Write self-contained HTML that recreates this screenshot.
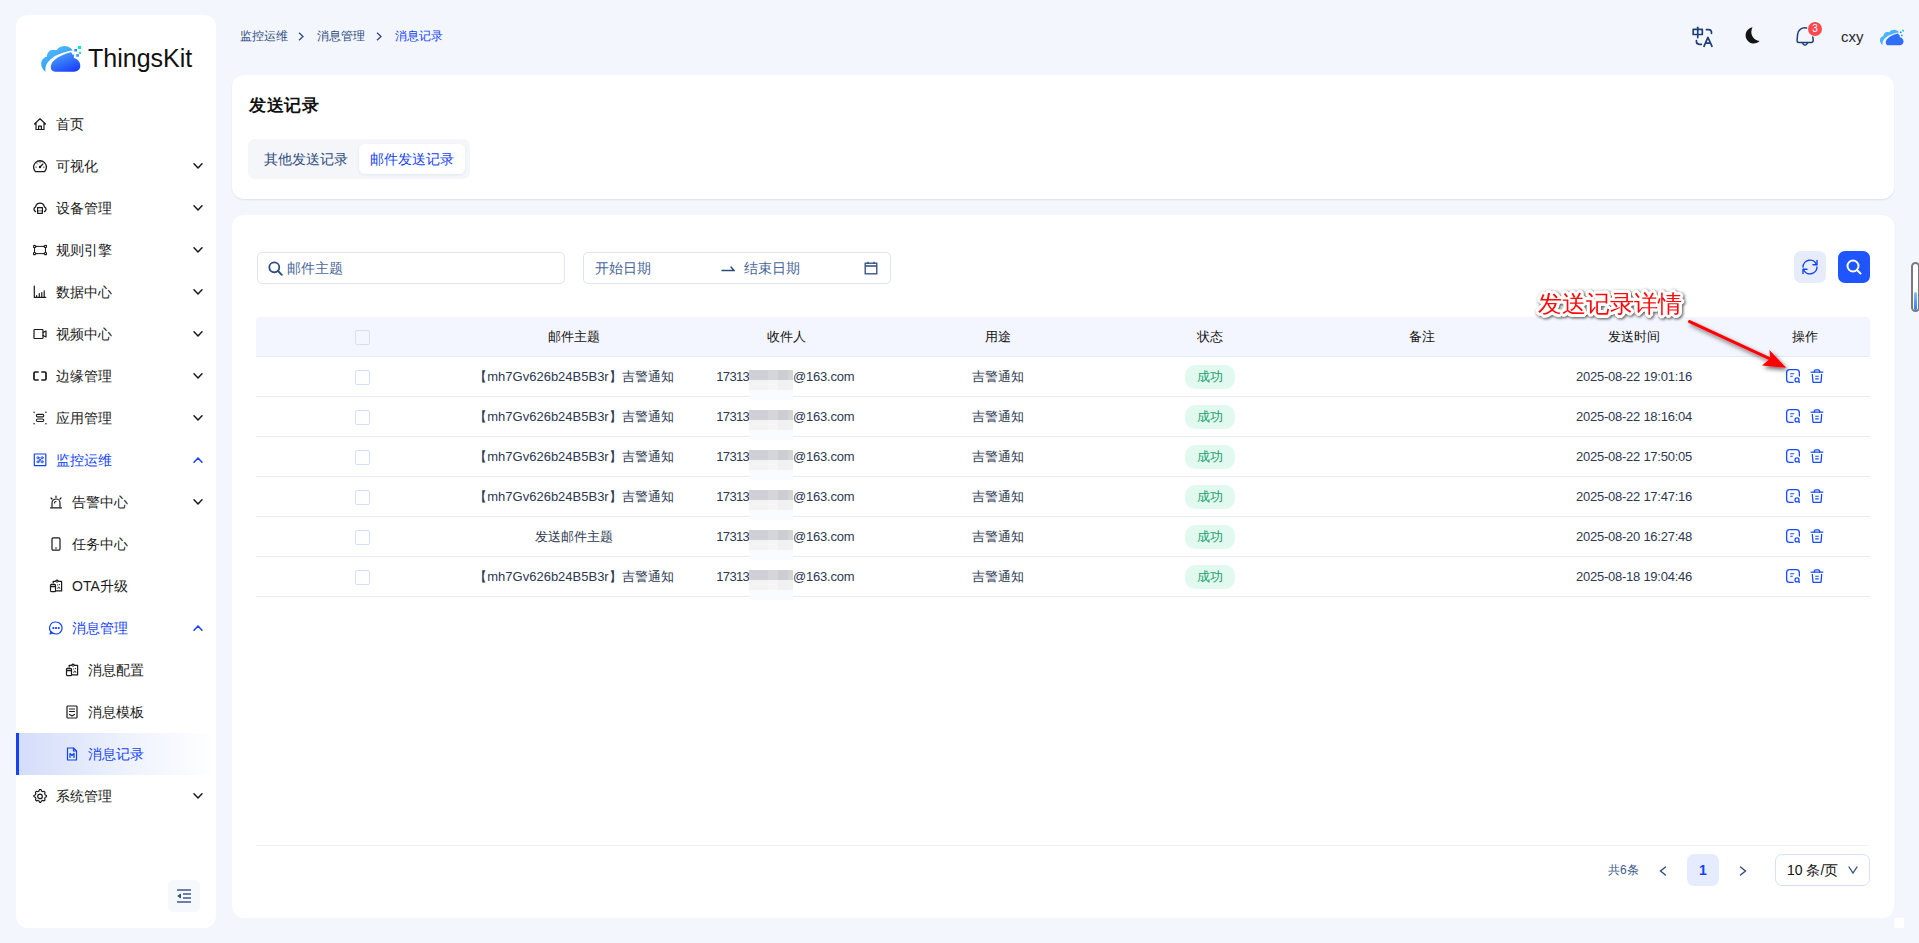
<!DOCTYPE html>
<html><head><meta charset="utf-8">
<style>
*{box-sizing:border-box;margin:0;padding:0}
html,body{width:1919px;height:943px;overflow:hidden;background:#f3f6fd;font-family:"Liberation Sans",sans-serif;color:#1f1f1f}
.abs{position:absolute}
svg{display:block}
#side{position:absolute;left:16px;top:15px;width:200px;height:913px;background:#fff;border-radius:12px;overflow:hidden}
.mi{position:absolute;left:0;width:200px;height:42px;font-size:14px;line-height:42px;color:#1a1a1a;white-space:nowrap}
.mi .ic{position:absolute;top:14px;width:14px;height:14px}
.mi .tx{position:absolute;top:0}
.mi .chev{position:absolute;left:177px;top:18px;width:10px;height:6px}
.mi.blue{color:#1443f5}
.mi.sel{background:linear-gradient(90deg,#d3dcfa 0%,#eef2fd 55%,#ffffff 100%)}
.mi.sel:before{content:"";position:absolute;left:0;top:0;width:3px;height:42px;background:#1443f5}
#crumb{position:absolute;left:240px;top:28px;font-size:12px;line-height:16px;color:#2d4b7d;white-space:nowrap}
.card{position:absolute;left:232px;width:1662px;background:#fff;border-radius:12px}
.inp{position:absolute;border:1px solid #dbe4f8;border-radius:5px;background:#fff}
.ph{position:absolute;font-size:14px;line-height:16px;color:#49669a;white-space:nowrap}
.th{position:absolute;font-size:13px;line-height:16px;color:#111;white-space:nowrap;font-weight:500;transform:translateX(-50%)}
.td{position:absolute;font-size:13px;line-height:16px;color:#2c3850;white-space:nowrap;transform:translateX(-50%)}
.cb{position:absolute;left:355px;width:15px;height:15px;border:1px solid #d3dffb;border-radius:2px;background:#fff}
.rowline{position:absolute;left:256px;width:1614px;height:1px;background:#e2e9fa}
.tag{position:absolute;left:1185px;width:50px;height:24px;border-radius:10px;background:#e2f9ef;color:#18a06a;font-size:13px;line-height:24px;text-align:center}
.act{position:absolute;width:14px;height:14px}
</style></head><body>

<!-- SIDEBAR -->
<div id="side">
  <!-- logo -->
  <svg class="abs" style="left:22px;top:25px" width="48" height="36" viewBox="38 40 48 36">
    <defs>
      <linearGradient id="lg1" x1="0" y1="0" x2="0.6" y2="1"><stop offset="0" stop-color="#5ec0ff"/><stop offset="1" stop-color="#2196f8"/></linearGradient>
      <linearGradient id="lg2" x1="0.2" y1="0" x2="0.8" y2="1"><stop offset="0" stop-color="#4aa8ff"/><stop offset="1" stop-color="#1a3cff"/></linearGradient>
    </defs>
    <path d="M45.6 71.7C42 69 40.5 65 41.5 61.5C42.3 59 44 57.5 47 56.5C46.8 52.5 50 49.5 53.5 49.8C55 50 56 50.2 56.7 50C58.5 47 62 45.8 65 46C68.5 46.3 71.5 48 72.7 50.5C68 51 62 52.5 55 56C50 59 46.5 63 45.6 67C45.3 69 45.4 70.5 45.6 71.7Z" fill="url(#lg1)"/>
    <path d="M51.3 69.5C50 66 51.5 62.5 54.5 60C59 56 65 53.5 70.8 52.2L72 53.2L72 54.4L73.9 54.6L73.9 58C76 58.3 80.3 61 80.3 65.5C80.3 69.5 77.5 71.7 74 71.7L55.5 71.7C53.5 71.7 52 70.8 51.3 69.5Z" fill="url(#lg2)"/>
    <rect x="78.1" y="45.9" width="3" height="3.1" fill="#00e5d0"/>
    <rect x="74.3" y="49" width="2.7" height="2.5" fill="#1e90ff"/>
    <rect x="78.9" y="51.8" width="2.1" height="2.1" fill="#20d0e0"/>
    <rect x="76.2" y="54.1" width="2.7" height="2.7" fill="#3aa0e8"/>
  </svg>
  <div class="abs" style="left:72px;top:28px;font-size:25px;line-height:30px;color:#111;letter-spacing:0px">ThingsKit</div>

  <div class="mi " style="top:88px"><div class="ic" style="left:17px"><svg width="14" height="14" viewBox="0 0 14 14" fill="none" stroke="#1a1a1a" stroke-width="1.2" stroke-linecap="round" stroke-linejoin="round" ><path d="M1.5 7L7 1.8L12.5 7M3 5.8V12.5H11V5.8M5.6 12.5V9.2H8.4V12.5"/></svg></div><div class="tx" style="left:40px">首页</div></div>
<div class="mi " style="top:130px"><div class="ic" style="left:17px"><svg width="14" height="14" viewBox="0 0 14 14" fill="none" stroke="#1a1a1a" stroke-width="1.2" stroke-linecap="round" stroke-linejoin="round" ><path d="M2.4 12.6A6.4 6.4 0 1 1 11.6 12.6Z" stroke-width="1.3"/><path d="M7 8L9.6 5.4" stroke-width="1.3"/><circle cx="7" cy="8" r="0.6" fill="#1a1a1a"/><path d="M2.9 8.2H3.4M4.1 4.6L4.5 5M7 3.2V3.7M9.9 4.6L9.5 5M11.1 8.2H10.6" stroke-width="0.9"/></svg></div><div class="tx" style="left:40px">可视化</div><div class="chev"><svg width="10" height="6" viewBox="0 0 10 6" fill="none" stroke="#1a1a1a" stroke-width="1.5" stroke-linecap="round" stroke-linejoin="round"><path d="M1 0.8L5 5L9 0.8"/></svg></div></div>
<div class="mi " style="top:172px"><div class="ic" style="left:17px"><svg width="14" height="14" viewBox="0 0 14 14" fill="none" stroke="#1a1a1a" stroke-width="1.2" stroke-linecap="round" stroke-linejoin="round" ><path d="M2.6 10.6C0.6 9.5 0.2 6.8 2.6 5.8C3.1 3.9 4.6 2.2 7 2.2C9.4 2.2 10.9 3.9 11.4 5.8C13.8 6.8 13.4 9.5 11.4 10.6" stroke-width="1.3"/><rect x="4.6" y="6.7" width="4.8" height="5.6" stroke-width="1.2"/><path d="M4.6 9.9H9.4" stroke-width="0.7"/></svg></div><div class="tx" style="left:40px">设备管理</div><div class="chev"><svg width="10" height="6" viewBox="0 0 10 6" fill="none" stroke="#1a1a1a" stroke-width="1.5" stroke-linecap="round" stroke-linejoin="round"><path d="M1 0.8L5 5L9 0.8"/></svg></div></div>
<div class="mi " style="top:214px"><div class="ic" style="left:17px"><svg width="14" height="14" viewBox="0 0 14 14" fill="none" stroke="#1a1a1a" stroke-width="1.2" stroke-linecap="round" stroke-linejoin="round" ><path d="M2.8 3.4H11.2M2.8 10.6H11.2M1.5 4.6V9.4M12.5 4.6V9.4" stroke-width="1"/><ellipse cx="1.6" cy="3.4" rx="1.3" ry="1.1"/><ellipse cx="12.4" cy="3.4" rx="1.3" ry="1.1"/><ellipse cx="1.6" cy="10.6" rx="1.3" ry="1.1"/><ellipse cx="12.4" cy="10.6" rx="1.3" ry="1.1"/></svg></div><div class="tx" style="left:40px">规则引擎</div><div class="chev"><svg width="10" height="6" viewBox="0 0 10 6" fill="none" stroke="#1a1a1a" stroke-width="1.5" stroke-linecap="round" stroke-linejoin="round"><path d="M1 0.8L5 5L9 0.8"/></svg></div></div>
<div class="mi " style="top:256px"><div class="ic" style="left:17px"><svg width="14" height="14" viewBox="0 0 14 14" fill="none" stroke="#1a1a1a" stroke-width="1.2" stroke-linecap="round" stroke-linejoin="round" ><path d="M1.3 1.2V12.4H12.8" stroke-width="1.2"/><path d="M3.6 10.6V11.6M6.3 8.6V11.6M8.8 7.6V11.6M11.2 5.8V11.6" stroke-width="1.2"/></svg></div><div class="tx" style="left:40px">数据中心</div><div class="chev"><svg width="10" height="6" viewBox="0 0 10 6" fill="none" stroke="#1a1a1a" stroke-width="1.5" stroke-linecap="round" stroke-linejoin="round"><path d="M1 0.8L5 5L9 0.8"/></svg></div></div>
<div class="mi " style="top:298px"><div class="ic" style="left:17px"><svg width="14" height="14" viewBox="0 0 14 14" fill="none" stroke="#1a1a1a" stroke-width="1.2" stroke-linecap="round" stroke-linejoin="round" ><rect x="1" y="2.5" width="9" height="9" rx="0.8"/><path d="M10 5.5L13 4V10L10 8.5"/></svg></div><div class="tx" style="left:40px">视频中心</div><div class="chev"><svg width="10" height="6" viewBox="0 0 10 6" fill="none" stroke="#1a1a1a" stroke-width="1.5" stroke-linecap="round" stroke-linejoin="round"><path d="M1 0.8L5 5L9 0.8"/></svg></div></div>
<div class="mi " style="top:340px"><div class="ic" style="left:17px"><svg width="14" height="14" viewBox="0 0 14 14" fill="none" stroke="#1a1a1a" stroke-width="1.2" stroke-linecap="round" stroke-linejoin="round" ><path d="M5 3H2.2A1.2 1.2 0 0 0 1 4.2V9.8A1.2 1.2 0 0 0 2.2 11H5M9 3H11.8A1.2 1.2 0 0 1 13 4.2V9.8A1.2 1.2 0 0 1 11.8 11H9" stroke-width="1.7"/></svg></div><div class="tx" style="left:40px">边缘管理</div><div class="chev"><svg width="10" height="6" viewBox="0 0 10 6" fill="none" stroke="#1a1a1a" stroke-width="1.5" stroke-linecap="round" stroke-linejoin="round"><path d="M1 0.8L5 5L9 0.8"/></svg></div></div>
<div class="mi " style="top:382px"><div class="ic" style="left:17px"><svg width="14" height="14" viewBox="0 0 14 14" fill="none" stroke="#1a1a1a" stroke-width="1.2" stroke-linecap="round" stroke-linejoin="round" ><circle cx="1.1" cy="1.2" r="0.8" fill="#1a1a1a" stroke="none"/><circle cx="12.9" cy="1.2" r="0.8" fill="#1a1a1a" stroke="none"/><circle cx="1.1" cy="12.8" r="0.8" fill="#1a1a1a" stroke="none"/><circle cx="12.9" cy="12.8" r="0.8" fill="#1a1a1a" stroke="none"/><rect x="3.4" y="3.4" width="7.4" height="2.5" rx="1.2" stroke-width="1.1"/><rect x="3.4" y="8" width="7.4" height="2.5" rx="1.2" stroke-width="1.1"/></svg></div><div class="tx" style="left:40px">应用管理</div><div class="chev"><svg width="10" height="6" viewBox="0 0 10 6" fill="none" stroke="#1a1a1a" stroke-width="1.5" stroke-linecap="round" stroke-linejoin="round"><path d="M1 0.8L5 5L9 0.8"/></svg></div></div>
<div class="mi blue" style="top:424px"><div class="ic" style="left:17px"><svg width="14" height="14" viewBox="0 0 14 14" fill="none" stroke="#1443f5" stroke-width="1.2" stroke-linecap="round" stroke-linejoin="round" ><rect x="1.3" y="1" width="11.5" height="11.6" stroke-width="1.2"/><circle cx="5" cy="4.8" r="1.1" stroke-width="0.9"/><circle cx="9.1" cy="4.8" r="1.1" stroke-width="0.9"/><circle cx="5" cy="8.8" r="1.1" stroke-width="0.9"/><circle cx="9.1" cy="8.8" r="1.1" stroke-width="0.9"/><path d="M5.8 5.6L8.3 8M8.3 5.6L5.8 8" stroke-width="0.9"/></svg></div><div class="tx" style="left:40px">监控运维</div><div class="chev"><svg width="10" height="6" viewBox="0 0 10 6" fill="none" stroke="#1443f5" stroke-width="1.5" stroke-linecap="round" stroke-linejoin="round"><path d="M1 5.2L5 1L9 5.2"/></svg></div></div>
<div class="mi " style="top:466px"><div class="ic" style="left:33px"><svg width="14" height="14" viewBox="0 0 14 14" fill="none" stroke="#1a1a1a" stroke-width="1.2" stroke-linecap="round" stroke-linejoin="round" ><path d="M3 12V8A4 4 0 0 1 11 8V12"/><path d="M1.5 12.8H12.5"/><path d="M7 1V2.5M2 3L3 4M12 3L11 4"/><path d="M5.5 8A1.5 1.5 0 0 1 7 6.5"/></svg></div><div class="tx" style="left:56px">告警中心</div><div class="chev"><svg width="10" height="6" viewBox="0 0 10 6" fill="none" stroke="#1a1a1a" stroke-width="1.5" stroke-linecap="round" stroke-linejoin="round"><path d="M1 0.8L5 5L9 0.8"/></svg></div></div>
<div class="mi " style="top:508px"><div class="ic" style="left:33px"><svg width="14" height="14" viewBox="0 0 14 14" fill="none" stroke="#1a1a1a" stroke-width="1.2" stroke-linecap="round" stroke-linejoin="round" ><rect x="3" y="0.8" width="8" height="12.4" rx="1.2"/><path d="M6.5 11H7.5"/></svg></div><div class="tx" style="left:56px">任务中心</div></div>
<div class="mi " style="top:550px"><div class="ic" style="left:33px"><svg width="14" height="14" viewBox="0 0 14 14" fill="none" stroke="#1a1a1a" stroke-width="1.2" stroke-linecap="round" stroke-linejoin="round" ><path d="M4.2 4V2.3H6.4L8 1.1L9.6 2.3H12.6V11.9H6.8" stroke-width="1.2"/><path d="M6.5 2.4L8 3.3L9.5 2.4" stroke-width="1"/><rect x="1.5" y="5.4" width="5" height="7.2" rx="0.9" fill="#fff" stroke-width="1.2"/><path d="M1.8 7.6H6.2" stroke-width="1.5"/><circle cx="8.8" cy="5.9" r="0.55" fill="#1a1a1a" stroke="none"/><circle cx="10.5" cy="5.6" r="0.55" fill="#1a1a1a" stroke="none"/><path d="M8.7 9.3A1.1 1.1 0 0 1 10.9 9.3" stroke-width="1"/></svg></div><div class="tx" style="left:56px">OTA升级</div></div>
<div class="mi blue" style="top:592px"><div class="ic" style="left:33px"><svg width="14" height="14" viewBox="0 0 14 14" fill="none" stroke="#1443f5" stroke-width="1.2" stroke-linecap="round" stroke-linejoin="round" ><path d="M7 1A6 6 0 1 1 2.2 10.6L1 13L3.3 12A6 6 0 0 1 7 1Z"/><circle cx="4.3" cy="7" r="0.5" fill="#1443f5"/><circle cx="7" cy="7" r="0.5" fill="#1443f5"/><circle cx="9.7" cy="7" r="0.5" fill="#1443f5"/></svg></div><div class="tx" style="left:56px">消息管理</div><div class="chev"><svg width="10" height="6" viewBox="0 0 10 6" fill="none" stroke="#1443f5" stroke-width="1.5" stroke-linecap="round" stroke-linejoin="round"><path d="M1 5.2L5 1L9 5.2"/></svg></div></div>
<div class="mi " style="top:634px"><div class="ic" style="left:49px"><svg width="14" height="14" viewBox="0 0 14 14" fill="none" stroke="#1a1a1a" stroke-width="1.2" stroke-linecap="round" stroke-linejoin="round" ><path d="M4.2 4V2.3H6.4L8 1.1L9.6 2.3H12.6V11.9H6.8" stroke-width="1.2"/><path d="M6.5 2.4L8 3.3L9.5 2.4" stroke-width="1"/><rect x="1.5" y="5.4" width="5" height="7.2" rx="0.9" fill="#fff" stroke-width="1.2"/><path d="M1.8 7.6H6.2" stroke-width="1.5"/><circle cx="8.8" cy="5.9" r="0.55" fill="#1a1a1a" stroke="none"/><circle cx="10.5" cy="5.6" r="0.55" fill="#1a1a1a" stroke="none"/><path d="M8.7 9.3A1.1 1.1 0 0 1 10.9 9.3" stroke-width="1"/></svg></div><div class="tx" style="left:72px">消息配置</div></div>
<div class="mi " style="top:676px"><div class="ic" style="left:49px"><svg width="14" height="14" viewBox="0 0 14 14" fill="none" stroke="#1a1a1a" stroke-width="1.2" stroke-linecap="round" stroke-linejoin="round" ><rect x="2" y="1" width="10" height="12" rx="0.8"/><path d="M4.5 4H9.5M4.5 6.5H9.5M4.5 9.5L7 11L9.5 9.5"/></svg></div><div class="tx" style="left:72px">消息模板</div></div>
<div class="mi blue sel" style="top:718px"><div class="ic" style="left:49px"><svg width="14" height="14" viewBox="0 0 14 14" fill="none" stroke="#1443f5" stroke-width="1.2" stroke-linecap="round" stroke-linejoin="round" ><path d="M2.5 1H8.5L11.5 4V13H2.5Z"/><path d="M8.5 1V4H11.5"/><path d="M5 10.5V6.5L7 8.5L9 6.5V10.5"/></svg></div><div class="tx" style="left:72px">消息记录</div></div>
<div class="mi " style="top:760px"><div class="ic" style="left:17px"><svg width="14" height="14" viewBox="0 0 14 14" fill="none" stroke="#1a1a1a" stroke-width="1.2" stroke-linecap="round" stroke-linejoin="round" ><path d="M7 0.9L8.3 1.2L8.7 2.7L10 3.4L11.5 3L12.4 4L12 5.5L12.7 6.8L14 7.3L13.9 8.6L12.6 9.1L12 10.4L12.4 11.9L11.4 12.8L9.9 12.4L8.6 13.1L8.1 14.4L6.8 14.4L6.3 13.1L5 12.4L3.5 12.8L2.6 11.9L3 10.4L2.4 9.1L1 8.6L0.9 7.3L2.3 6.8L2.9 5.5L2.5 4L3.4 3L4.9 3.4L6.2 2.7L6.6 1.2Z" transform="translate(0 -0.6) scale(0.97)"/><circle cx="7" cy="7.4" r="2.3"/></svg></div><div class="tx" style="left:40px">系统管理</div><div class="chev"><svg width="10" height="6" viewBox="0 0 10 6" fill="none" stroke="#1a1a1a" stroke-width="1.5" stroke-linecap="round" stroke-linejoin="round"><path d="M1 0.8L5 5L9 0.8"/></svg></div></div>

  <div class="abs" style="left:152px;top:865px;width:32px;height:32px;border-radius:6px;background:#f6f8fb">
    <svg class="abs" style="left:9px;top:9px" width="14" height="14" viewBox="0 0 14 14" fill="none" stroke="#3d5a8f" stroke-width="1.5">
      <path d="M0 1H14M6 5H14M6 9H14M0 13H14"/><path d="M3.5 5L0.8 7L3.5 9Z" fill="#3d5a8f" stroke-width="1"/>
    </svg>
  </div>
</div>

<!-- HEADER -->
<div id="crumb">
  <span class="abs" style="left:0;top:0">监控运维</span>
  <svg class="abs" style="left:58px;top:4px" width="6" height="9" viewBox="0 0 6 9" fill="none" stroke="#2d4b7d" stroke-width="1.3"><path d="M1 0.8L5 4.5L1 8.2"/></svg>
  <span class="abs" style="left:77px;top:0">消息管理</span>
  <svg class="abs" style="left:136px;top:4px" width="6" height="9" viewBox="0 0 6 9" fill="none" stroke="#2d4b7d" stroke-width="1.3"><path d="M1 0.8L5 4.5L1 8.2"/></svg>
  <span class="abs" style="left:155px;top:0;color:#1443f5">消息记录</span>
</div>


<svg class="abs" style="left:1688px;top:18px" width="48" height="36" viewBox="1688 18 48 36" fill="none" stroke="#1f3f7a" stroke-width="1.7" stroke-linecap="round" stroke-linejoin="round">
  <path d="M1693.2 29.3H1702.3V34.5H1693.2Z"/><path d="M1697.75 27.3V37.6"/>
  <path d="M1706.4 29.6H1708.5A3 3 0 0 1 1711.5 32.6V33.3"/><path d="M1696.4 40.6V41.3A3 3 0 0 0 1699.4 44.3H1701.4"/>
  <path d="M1704 46.3L1707.9 37.4L1712 46.3M1705.4 43.2H1710.6"/>
</svg>
<svg class="abs" style="left:1738px;top:18px" width="30" height="36" viewBox="1738 18 30 36">
  <path d="M1752.6 27.2A8.2 8.2 0 1 0 1759.6 41.1A9.2 9.2 0 0 1 1752.6 27.2Z" fill="#141414"/>
</svg>
<svg class="abs" style="left:1788px;top:18px" width="40" height="36" viewBox="1788 18 40 36" fill="none" stroke="#1f3f7a" stroke-width="1.5" stroke-linecap="round" stroke-linejoin="round">
  <path d="M1806.6 28A7.2 7.2 0 0 0 1797.6 34.6L1797.1 40Q1796.8 42.4 1798.8 42.4H1811.2Q1813.4 42.4 1813.2 40L1812.8 37"/><path d="M1802.4 42.8Q1805 47.6 1807.6 42.8"/>
</svg>
<div class="abs" style="left:1808px;top:22px;width:14px;height:14px;border-radius:7px;background:#f84a4f;color:#fff;font-size:10px;line-height:14px;text-align:center">3</div>
<div class="abs" style="left:1841px;top:28.5px;font-size:15px;line-height:16px;color:#2a2a2a">cxy</div>
<svg class="abs" style="left:1878px;top:25.5px" width="29" height="22" viewBox="38 40 48 36">
  <path d="M45.6 71.7C42 69 40.5 65 41.5 61.5C42.3 59 44 57.5 47 56.5C46.8 52.5 50 49.5 53.5 49.8C55 50 56 50.2 56.7 50C58.5 47 62 45.8 65 46C68.5 46.3 71.5 48 72.7 50.5C68 51 62 52.5 55 56C50 59 46.5 63 45.6 67C45.3 69 45.4 70.5 45.6 71.7Z" fill="#4ab4ff"/>
  <path d="M51.3 69.5C50 66 51.5 62.5 54.5 60C59 56 65 53.5 70.8 52.2L72 53.2L72 54.4L73.9 54.6L73.9 58C76 58.3 80.3 61 80.3 65.5C80.3 69.5 77.5 71.7 74 71.7L55.5 71.7C53.5 71.7 52 70.8 51.3 69.5Z" fill="#2f6ff8"/>
  <rect x="78.1" y="45.9" width="3" height="3.1" fill="#00e5d0"/><rect x="74.3" y="49" width="2.7" height="2.5" fill="#1e90ff"/><rect x="76.2" y="54.1" width="2.7" height="2.7" fill="#3aa0e8"/>
</svg>


<!-- CARD 1 -->
<div class="card" style="top:75px;height:124px;box-shadow:0 1px 1.5px rgba(40,50,80,0.10)">
  <div class="abs" style="left:17px;top:20px;font-size:17px;letter-spacing:0.5px;line-height:22px;font-weight:bold;color:#111">发送记录</div>
  <div class="abs" style="left:16px;top:64px;width:222px;height:40px;border-radius:7px;background:#f4f6fa">
    <div class="abs" style="left:16px;top:12px;font-size:14px;line-height:16px;color:#2d4b7d;white-space:nowrap">其他发送记录</div>
    <div class="abs" style="left:111px;top:5px;width:106px;height:30px;border-radius:6px;background:#fff;box-shadow:0 1px 3px rgba(30,50,100,0.08)">
      <div class="abs" style="left:11px;top:7px;font-size:14px;line-height:16px;color:#1443f5;white-space:nowrap">邮件发送记录</div>
    </div>
  </div>
</div>

<!-- CARD 2 -->
<div class="card" style="top:215px;height:703px"></div>

<div class="inp" style="left:257px;top:252px;width:308px;height:32px"></div>
<svg class="abs" style="left:268px;top:261px" width="15" height="15" viewBox="0 0 15 15" fill="none" stroke="#2d4b7d" stroke-width="1.8" stroke-linecap="round"><circle cx="6.3" cy="6.3" r="5"/><path d="M10 10L13.8 13.8"/></svg>
<div class="ph" style="left:287px;top:260px">邮件主题</div>
<div class="inp" style="left:583px;top:252px;width:308px;height:32px"></div>
<div class="ph" style="left:595px;top:260px">开始日期</div>
<svg class="abs" style="left:721px;top:265px" width="14" height="7" viewBox="0 0 14 7" fill="none" stroke="#2d4b7d" stroke-width="1.4" stroke-linecap="round"><path d="M1 5.5H13L10 2"/></svg>
<div class="ph" style="left:744px;top:260px">结束日期</div>
<svg class="abs" style="left:864px;top:261px" width="14" height="14" viewBox="0 0 14 14" fill="none" stroke="#2d4b7d" stroke-width="1.3"><rect x="1.2" y="2.2" width="11.6" height="10.6"/><path d="M1.2 5H12.8M4 0.8V3M10 0.8V3"/></svg>
<div class="abs" style="left:1794px;top:251px;width:32px;height:32px;border-radius:7px;background:#e7ecfd"></div>
<svg class="abs" style="left:1801px;top:258px" width="18" height="18" viewBox="0 0 18 18" fill="none" stroke="#1443f5" stroke-width="1.4" stroke-linecap="round" stroke-linejoin="round"><path d="M2 9A7 7 0 0 1 15.5 6.5"/><path d="M16 2.5V6.8H12"/><path d="M16 9A7 7 0 0 1 2.5 11.5"/><path d="M2 15.5V11.2H6"/></svg>
<div class="abs" style="left:1838px;top:251px;width:32px;height:32px;border-radius:7px;background:#1f55fe"></div>
<svg class="abs" style="left:1845px;top:258px" width="18" height="18" viewBox="0 0 18 18" fill="none" stroke="#fff" stroke-width="2" stroke-linecap="round"><circle cx="8" cy="8" r="5.5"/><path d="M12 12L15.5 15.5"/></svg>
<div class="abs" style="left:256px;top:317px;width:1614px;height:40px;background:#f3f6fe;border-radius:4px 4px 0 0"></div>
<div class="rowline" style="top:356px"></div>
<div class="cb" style="top:330px;background:transparent"></div>
<div class="th" style="left:574px;top:329px">邮件主题</div>
<div class="th" style="left:786px;top:329px">收件人</div>
<div class="th" style="left:998px;top:329px">用途</div>
<div class="th" style="left:1210px;top:329px">状态</div>
<div class="th" style="left:1422px;top:329px">备注</div>
<div class="th" style="left:1634px;top:329px">发送时间</div>
<div class="th" style="left:1805px;top:329px">操作</div>
<div class="cb" style="top:370px"></div>
<div class="td" style="left:574px;top:369px">【mh7Gv626b24B5B3r】吉警通知</div>
<div class="abs" style="left:649px;width:100px;text-align:right;top:369px;font-size:13px;line-height:16px;color:#2c3850;letter-spacing:-0.7px;white-space:nowrap">17313</div>
<div class="abs" style="left:793px;top:369px;font-size:13px;line-height:16px;color:#2c3850;letter-spacing:-0.2px;white-space:nowrap">@163.com</div>
<div class="td" style="left:998px;top:369px">吉警通知</div>
<div class="tag" style="top:365px">成功</div>
<div class="td" style="left:1634px;top:369px;letter-spacing:-0.25px">2025-08-22 19:01:16</div>
<svg class="act" style="left:1786px;top:369px" width="14" height="14" viewBox="0 0 14 14" fill="none" stroke="#1a4cf5" stroke-width="1.3" stroke-linecap="round"><path d="M7.2 13.35H3.6A3 3 0 0 1 0.65 10.4V3.6A3 3 0 0 1 3.6 0.65H10.4A3 3 0 0 1 13.35 3.6V7"/><path d="M4.2 4.8H8.2M4.2 7.3H6.8" stroke-linecap="butt" stroke-width="1.1"/><circle cx="11" cy="10.9" r="2"/><path d="M12.5 12.4L13.5 13.4"/></svg>
<svg class="act" style="left:1810px;top:369px" width="14" height="14" viewBox="0 0 14 14" fill="none" stroke="#1a4cf5" stroke-width="1.3" stroke-linecap="round" stroke-linejoin="round"><path d="M1 3.1H12.8"/><path d="M4.4 3V2.1A1.3 1.3 0 0 1 5.7 0.8H8.3A1.3 1.3 0 0 1 9.6 2.1V3"/><path d="M2.3 5.3L2.9 12.4A1.2 1.2 0 0 0 4.1 13.5H9.9A1.2 1.2 0 0 0 11.1 12.4L11.7 5.3"/><path d="M5.2 7.3H8.8M5.2 9.9H8.8" stroke-linecap="butt" stroke-width="1.1"/></svg>
<div class="rowline" style="top:396px"></div>
<div class="abs" style="left:749px;top:370px;width:44px;height:30px"><div class="abs" style="left:0;top:0;width:19px;height:10px;background:#cfd0d5"></div><div class="abs" style="left:19px;top:0;width:10px;height:10px;background:#d5d6da"></div><div class="abs" style="left:29px;top:0;width:10px;height:10px;background:#ccced2"></div><div class="abs" style="left:39px;top:0;width:5px;height:10px;background:#d3d4d8"></div><div class="abs" style="left:0;top:10px;width:19px;height:10px;background:#f3f3f4"></div><div class="abs" style="left:19px;top:10px;width:10px;height:10px;background:#f5f5f6"></div><div class="abs" style="left:29px;top:10px;width:10px;height:10px;background:#f1f1f2"></div><div class="abs" style="left:39px;top:10px;width:5px;height:10px;background:#f2f2f3"></div><div class="abs" style="left:0;top:20px;width:44px;height:10px;background:#fafbfe"></div></div>
<div class="cb" style="top:410px"></div>
<div class="td" style="left:574px;top:409px">【mh7Gv626b24B5B3r】吉警通知</div>
<div class="abs" style="left:649px;width:100px;text-align:right;top:409px;font-size:13px;line-height:16px;color:#2c3850;letter-spacing:-0.7px;white-space:nowrap">17313</div>
<div class="abs" style="left:793px;top:409px;font-size:13px;line-height:16px;color:#2c3850;letter-spacing:-0.2px;white-space:nowrap">@163.com</div>
<div class="td" style="left:998px;top:409px">吉警通知</div>
<div class="tag" style="top:405px">成功</div>
<div class="td" style="left:1634px;top:409px;letter-spacing:-0.25px">2025-08-22 18:16:04</div>
<svg class="act" style="left:1786px;top:409px" width="14" height="14" viewBox="0 0 14 14" fill="none" stroke="#1a4cf5" stroke-width="1.3" stroke-linecap="round"><path d="M7.2 13.35H3.6A3 3 0 0 1 0.65 10.4V3.6A3 3 0 0 1 3.6 0.65H10.4A3 3 0 0 1 13.35 3.6V7"/><path d="M4.2 4.8H8.2M4.2 7.3H6.8" stroke-linecap="butt" stroke-width="1.1"/><circle cx="11" cy="10.9" r="2"/><path d="M12.5 12.4L13.5 13.4"/></svg>
<svg class="act" style="left:1810px;top:409px" width="14" height="14" viewBox="0 0 14 14" fill="none" stroke="#1a4cf5" stroke-width="1.3" stroke-linecap="round" stroke-linejoin="round"><path d="M1 3.1H12.8"/><path d="M4.4 3V2.1A1.3 1.3 0 0 1 5.7 0.8H8.3A1.3 1.3 0 0 1 9.6 2.1V3"/><path d="M2.3 5.3L2.9 12.4A1.2 1.2 0 0 0 4.1 13.5H9.9A1.2 1.2 0 0 0 11.1 12.4L11.7 5.3"/><path d="M5.2 7.3H8.8M5.2 9.9H8.8" stroke-linecap="butt" stroke-width="1.1"/></svg>
<div class="rowline" style="top:436px"></div>
<div class="abs" style="left:749px;top:410px;width:44px;height:30px"><div class="abs" style="left:0;top:0;width:19px;height:10px;background:#cfd0d5"></div><div class="abs" style="left:19px;top:0;width:10px;height:10px;background:#d5d6da"></div><div class="abs" style="left:29px;top:0;width:10px;height:10px;background:#ccced2"></div><div class="abs" style="left:39px;top:0;width:5px;height:10px;background:#d3d4d8"></div><div class="abs" style="left:0;top:10px;width:19px;height:10px;background:#f3f3f4"></div><div class="abs" style="left:19px;top:10px;width:10px;height:10px;background:#f5f5f6"></div><div class="abs" style="left:29px;top:10px;width:10px;height:10px;background:#f1f1f2"></div><div class="abs" style="left:39px;top:10px;width:5px;height:10px;background:#f2f2f3"></div><div class="abs" style="left:0;top:20px;width:44px;height:10px;background:#fafbfe"></div></div>
<div class="cb" style="top:450px"></div>
<div class="td" style="left:574px;top:449px">【mh7Gv626b24B5B3r】吉警通知</div>
<div class="abs" style="left:649px;width:100px;text-align:right;top:449px;font-size:13px;line-height:16px;color:#2c3850;letter-spacing:-0.7px;white-space:nowrap">17313</div>
<div class="abs" style="left:793px;top:449px;font-size:13px;line-height:16px;color:#2c3850;letter-spacing:-0.2px;white-space:nowrap">@163.com</div>
<div class="td" style="left:998px;top:449px">吉警通知</div>
<div class="tag" style="top:445px">成功</div>
<div class="td" style="left:1634px;top:449px;letter-spacing:-0.25px">2025-08-22 17:50:05</div>
<svg class="act" style="left:1786px;top:449px" width="14" height="14" viewBox="0 0 14 14" fill="none" stroke="#1a4cf5" stroke-width="1.3" stroke-linecap="round"><path d="M7.2 13.35H3.6A3 3 0 0 1 0.65 10.4V3.6A3 3 0 0 1 3.6 0.65H10.4A3 3 0 0 1 13.35 3.6V7"/><path d="M4.2 4.8H8.2M4.2 7.3H6.8" stroke-linecap="butt" stroke-width="1.1"/><circle cx="11" cy="10.9" r="2"/><path d="M12.5 12.4L13.5 13.4"/></svg>
<svg class="act" style="left:1810px;top:449px" width="14" height="14" viewBox="0 0 14 14" fill="none" stroke="#1a4cf5" stroke-width="1.3" stroke-linecap="round" stroke-linejoin="round"><path d="M1 3.1H12.8"/><path d="M4.4 3V2.1A1.3 1.3 0 0 1 5.7 0.8H8.3A1.3 1.3 0 0 1 9.6 2.1V3"/><path d="M2.3 5.3L2.9 12.4A1.2 1.2 0 0 0 4.1 13.5H9.9A1.2 1.2 0 0 0 11.1 12.4L11.7 5.3"/><path d="M5.2 7.3H8.8M5.2 9.9H8.8" stroke-linecap="butt" stroke-width="1.1"/></svg>
<div class="rowline" style="top:476px"></div>
<div class="abs" style="left:749px;top:450px;width:44px;height:30px"><div class="abs" style="left:0;top:0;width:19px;height:10px;background:#cfd0d5"></div><div class="abs" style="left:19px;top:0;width:10px;height:10px;background:#d5d6da"></div><div class="abs" style="left:29px;top:0;width:10px;height:10px;background:#ccced2"></div><div class="abs" style="left:39px;top:0;width:5px;height:10px;background:#d3d4d8"></div><div class="abs" style="left:0;top:10px;width:19px;height:10px;background:#f3f3f4"></div><div class="abs" style="left:19px;top:10px;width:10px;height:10px;background:#f5f5f6"></div><div class="abs" style="left:29px;top:10px;width:10px;height:10px;background:#f1f1f2"></div><div class="abs" style="left:39px;top:10px;width:5px;height:10px;background:#f2f2f3"></div><div class="abs" style="left:0;top:20px;width:44px;height:10px;background:#fafbfe"></div></div>
<div class="cb" style="top:490px"></div>
<div class="td" style="left:574px;top:489px">【mh7Gv626b24B5B3r】吉警通知</div>
<div class="abs" style="left:649px;width:100px;text-align:right;top:489px;font-size:13px;line-height:16px;color:#2c3850;letter-spacing:-0.7px;white-space:nowrap">17313</div>
<div class="abs" style="left:793px;top:489px;font-size:13px;line-height:16px;color:#2c3850;letter-spacing:-0.2px;white-space:nowrap">@163.com</div>
<div class="td" style="left:998px;top:489px">吉警通知</div>
<div class="tag" style="top:485px">成功</div>
<div class="td" style="left:1634px;top:489px;letter-spacing:-0.25px">2025-08-22 17:47:16</div>
<svg class="act" style="left:1786px;top:489px" width="14" height="14" viewBox="0 0 14 14" fill="none" stroke="#1a4cf5" stroke-width="1.3" stroke-linecap="round"><path d="M7.2 13.35H3.6A3 3 0 0 1 0.65 10.4V3.6A3 3 0 0 1 3.6 0.65H10.4A3 3 0 0 1 13.35 3.6V7"/><path d="M4.2 4.8H8.2M4.2 7.3H6.8" stroke-linecap="butt" stroke-width="1.1"/><circle cx="11" cy="10.9" r="2"/><path d="M12.5 12.4L13.5 13.4"/></svg>
<svg class="act" style="left:1810px;top:489px" width="14" height="14" viewBox="0 0 14 14" fill="none" stroke="#1a4cf5" stroke-width="1.3" stroke-linecap="round" stroke-linejoin="round"><path d="M1 3.1H12.8"/><path d="M4.4 3V2.1A1.3 1.3 0 0 1 5.7 0.8H8.3A1.3 1.3 0 0 1 9.6 2.1V3"/><path d="M2.3 5.3L2.9 12.4A1.2 1.2 0 0 0 4.1 13.5H9.9A1.2 1.2 0 0 0 11.1 12.4L11.7 5.3"/><path d="M5.2 7.3H8.8M5.2 9.9H8.8" stroke-linecap="butt" stroke-width="1.1"/></svg>
<div class="rowline" style="top:516px"></div>
<div class="abs" style="left:749px;top:490px;width:44px;height:30px"><div class="abs" style="left:0;top:0;width:19px;height:10px;background:#cfd0d5"></div><div class="abs" style="left:19px;top:0;width:10px;height:10px;background:#d5d6da"></div><div class="abs" style="left:29px;top:0;width:10px;height:10px;background:#ccced2"></div><div class="abs" style="left:39px;top:0;width:5px;height:10px;background:#d3d4d8"></div><div class="abs" style="left:0;top:10px;width:19px;height:10px;background:#f3f3f4"></div><div class="abs" style="left:19px;top:10px;width:10px;height:10px;background:#f5f5f6"></div><div class="abs" style="left:29px;top:10px;width:10px;height:10px;background:#f1f1f2"></div><div class="abs" style="left:39px;top:10px;width:5px;height:10px;background:#f2f2f3"></div><div class="abs" style="left:0;top:20px;width:44px;height:10px;background:#fafbfe"></div></div>
<div class="cb" style="top:530px"></div>
<div class="td" style="left:574px;top:529px">发送邮件主题</div>
<div class="abs" style="left:649px;width:100px;text-align:right;top:529px;font-size:13px;line-height:16px;color:#2c3850;letter-spacing:-0.7px;white-space:nowrap">17313</div>
<div class="abs" style="left:793px;top:529px;font-size:13px;line-height:16px;color:#2c3850;letter-spacing:-0.2px;white-space:nowrap">@163.com</div>
<div class="td" style="left:998px;top:529px">吉警通知</div>
<div class="tag" style="top:525px">成功</div>
<div class="td" style="left:1634px;top:529px;letter-spacing:-0.25px">2025-08-20 16:27:48</div>
<svg class="act" style="left:1786px;top:529px" width="14" height="14" viewBox="0 0 14 14" fill="none" stroke="#1a4cf5" stroke-width="1.3" stroke-linecap="round"><path d="M7.2 13.35H3.6A3 3 0 0 1 0.65 10.4V3.6A3 3 0 0 1 3.6 0.65H10.4A3 3 0 0 1 13.35 3.6V7"/><path d="M4.2 4.8H8.2M4.2 7.3H6.8" stroke-linecap="butt" stroke-width="1.1"/><circle cx="11" cy="10.9" r="2"/><path d="M12.5 12.4L13.5 13.4"/></svg>
<svg class="act" style="left:1810px;top:529px" width="14" height="14" viewBox="0 0 14 14" fill="none" stroke="#1a4cf5" stroke-width="1.3" stroke-linecap="round" stroke-linejoin="round"><path d="M1 3.1H12.8"/><path d="M4.4 3V2.1A1.3 1.3 0 0 1 5.7 0.8H8.3A1.3 1.3 0 0 1 9.6 2.1V3"/><path d="M2.3 5.3L2.9 12.4A1.2 1.2 0 0 0 4.1 13.5H9.9A1.2 1.2 0 0 0 11.1 12.4L11.7 5.3"/><path d="M5.2 7.3H8.8M5.2 9.9H8.8" stroke-linecap="butt" stroke-width="1.1"/></svg>
<div class="rowline" style="top:556px"></div>
<div class="abs" style="left:749px;top:530px;width:44px;height:30px"><div class="abs" style="left:0;top:0;width:19px;height:10px;background:#cfd0d5"></div><div class="abs" style="left:19px;top:0;width:10px;height:10px;background:#d5d6da"></div><div class="abs" style="left:29px;top:0;width:10px;height:10px;background:#ccced2"></div><div class="abs" style="left:39px;top:0;width:5px;height:10px;background:#d3d4d8"></div><div class="abs" style="left:0;top:10px;width:19px;height:10px;background:#f3f3f4"></div><div class="abs" style="left:19px;top:10px;width:10px;height:10px;background:#f5f5f6"></div><div class="abs" style="left:29px;top:10px;width:10px;height:10px;background:#f1f1f2"></div><div class="abs" style="left:39px;top:10px;width:5px;height:10px;background:#f2f2f3"></div><div class="abs" style="left:0;top:20px;width:44px;height:10px;background:#fafbfe"></div></div>
<div class="cb" style="top:570px"></div>
<div class="td" style="left:574px;top:569px">【mh7Gv626b24B5B3r】吉警通知</div>
<div class="abs" style="left:649px;width:100px;text-align:right;top:569px;font-size:13px;line-height:16px;color:#2c3850;letter-spacing:-0.7px;white-space:nowrap">17313</div>
<div class="abs" style="left:793px;top:569px;font-size:13px;line-height:16px;color:#2c3850;letter-spacing:-0.2px;white-space:nowrap">@163.com</div>
<div class="td" style="left:998px;top:569px">吉警通知</div>
<div class="tag" style="top:565px">成功</div>
<div class="td" style="left:1634px;top:569px;letter-spacing:-0.25px">2025-08-18 19:04:46</div>
<svg class="act" style="left:1786px;top:569px" width="14" height="14" viewBox="0 0 14 14" fill="none" stroke="#1a4cf5" stroke-width="1.3" stroke-linecap="round"><path d="M7.2 13.35H3.6A3 3 0 0 1 0.65 10.4V3.6A3 3 0 0 1 3.6 0.65H10.4A3 3 0 0 1 13.35 3.6V7"/><path d="M4.2 4.8H8.2M4.2 7.3H6.8" stroke-linecap="butt" stroke-width="1.1"/><circle cx="11" cy="10.9" r="2"/><path d="M12.5 12.4L13.5 13.4"/></svg>
<svg class="act" style="left:1810px;top:569px" width="14" height="14" viewBox="0 0 14 14" fill="none" stroke="#1a4cf5" stroke-width="1.3" stroke-linecap="round" stroke-linejoin="round"><path d="M1 3.1H12.8"/><path d="M4.4 3V2.1A1.3 1.3 0 0 1 5.7 0.8H8.3A1.3 1.3 0 0 1 9.6 2.1V3"/><path d="M2.3 5.3L2.9 12.4A1.2 1.2 0 0 0 4.1 13.5H9.9A1.2 1.2 0 0 0 11.1 12.4L11.7 5.3"/><path d="M5.2 7.3H8.8M5.2 9.9H8.8" stroke-linecap="butt" stroke-width="1.1"/></svg>
<div class="rowline" style="top:596px"></div>
<div class="abs" style="left:749px;top:570px;width:44px;height:30px"><div class="abs" style="left:0;top:0;width:19px;height:10px;background:#cfd0d5"></div><div class="abs" style="left:19px;top:0;width:10px;height:10px;background:#d5d6da"></div><div class="abs" style="left:29px;top:0;width:10px;height:10px;background:#ccced2"></div><div class="abs" style="left:39px;top:0;width:5px;height:10px;background:#d3d4d8"></div><div class="abs" style="left:0;top:10px;width:19px;height:10px;background:#f3f3f4"></div><div class="abs" style="left:19px;top:10px;width:10px;height:10px;background:#f5f5f6"></div><div class="abs" style="left:29px;top:10px;width:10px;height:10px;background:#f1f1f2"></div><div class="abs" style="left:39px;top:10px;width:5px;height:10px;background:#f2f2f3"></div><div class="abs" style="left:0;top:20px;width:44px;height:10px;background:#fafbfe"></div></div>
<div class="abs" style="left:256px;top:845px;width:1613px;height:1px;background:#f0f2f6"></div>
<div class="abs" style="left:1608px;top:862px;font-size:12px;line-height:16px;color:#3d5a8f;white-space:nowrap">共6条</div>
<svg class="abs" style="left:1659px;top:866px" width="8" height="10" viewBox="0 0 8 10" fill="none" stroke="#2d4b7d" stroke-width="1.4" stroke-linecap="round"><path d="M6.5 1L1.5 5L6.5 9"/></svg>
<div class="abs" style="left:1687px;top:854px;width:32px;height:32px;border-radius:7px;background:#e6ecfd;color:#1443f5;font-size:14px;font-weight:bold;line-height:32px;text-align:center">1</div>
<svg class="abs" style="left:1739px;top:866px" width="8" height="10" viewBox="0 0 8 10" fill="none" stroke="#2d4b7d" stroke-width="1.4" stroke-linecap="round"><path d="M1.5 1L6.5 5L1.5 9"/></svg>
<div class="inp" style="left:1775px;top:854px;width:95px;height:32px;border-color:#d6e0f8;border-radius:7px"></div>
<div class="abs" style="left:1787px;top:862px;font-size:14px;line-height:16px;color:#111;white-space:nowrap">10 条/页</div>
<svg class="abs" style="left:1848px;top:866px" width="10" height="8" viewBox="0 0 10 8" fill="none" stroke="#2d4b7d" stroke-width="1.3" stroke-linecap="round"><path d="M1 1L5 7L9 1"/></svg>
<div class="abs" style="left:1538px;top:289px;font-family:'Liberation Serif',serif;font-size:24px;line-height:30px;color:#ff0a0a;white-space:nowrap;text-shadow:3.00px 0.00px 0 #fff,2.77px 1.15px 0 #fff,2.12px 2.12px 0 #fff,1.15px 2.77px 0 #fff,0.00px 3.00px 0 #fff,-1.15px 2.77px 0 #fff,-2.12px 2.12px 0 #fff,-2.77px 1.15px 0 #fff,-3.00px 0.00px 0 #fff,-2.77px -1.15px 0 #fff,-2.12px -2.12px 0 #fff,-1.15px -2.77px 0 #fff,-0.00px -3.00px 0 #fff,1.15px -2.77px 0 #fff,2.12px -2.12px 0 #fff,2.77px -1.15px 0 #fff,2.00px 0.00px 0 #fff,1.85px 0.77px 0 #fff,1.41px 1.41px 0 #fff,0.77px 1.85px 0 #fff,0.00px 2.00px 0 #fff,-0.77px 1.85px 0 #fff,-1.41px 1.41px 0 #fff,-1.85px 0.77px 0 #fff,-2.00px 0.00px 0 #fff,-1.85px -0.77px 0 #fff,-1.41px -1.41px 0 #fff,-0.77px -1.85px 0 #fff,-0.00px -2.00px 0 #fff,0.77px -1.85px 0 #fff,1.41px -1.41px 0 #fff,1.85px -0.77px 0 #fff;filter:drop-shadow(1px 1.5px 1.5px rgba(0,0,0,0.7))">发送记录详情</div>
<svg class="abs" style="left:1680px;top:312px" width="115" height="65" viewBox="1680 312 115 65"><defs><filter id="sh" x="-20%" y="-20%" width="140%" height="150%"><feDropShadow dx="2" dy="2.5" stdDeviation="2" flood-color="#000" flood-opacity="0.6"/></filter></defs><g filter="url(#sh)"><path d="M1689.6 321.6L1769.5 358.6" stroke="#ff0606" stroke-width="3.2" stroke-linecap="round"/><path d="M1786.2 367.8L1769.4 350L1770.4 358.4L1762 365.6Z" fill="#ff0606"/></g></svg>
<div class="abs" style="left:1911px;top:262px;width:9px;height:50px;border:2px solid #7a7a7a;border-radius:5px;background:#fff"></div>
<div class="abs" style="left:1914px;top:292px;width:3px;height:18px;border-radius:2px;background:linear-gradient(#8cc0ff,#2f7cf6)"></div>
<div class="abs" style="left:1894px;top:918px;width:10px;height:10px;background:#fff"></div>

</body></html>
